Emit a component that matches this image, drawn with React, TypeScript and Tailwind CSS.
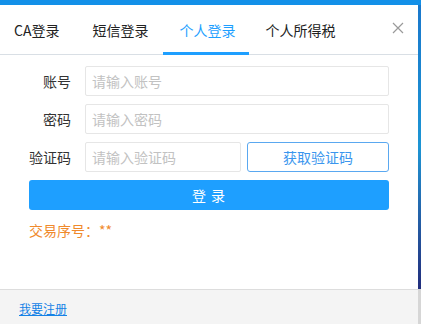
import React from 'react';

const tabs = [
  { label: 'CA登录', pad: 'pl-[14px] pr-[17px]' },
  { label: '短信登录', pad: 'pl-[16px] pr-[15px]' },
  { label: '个人登录', pad: 'pl-[16px] pr-[14px]' },
  { label: '个人所得税', pad: 'pl-[16px] pr-[16px]' },
];

const font = { fontFamily: '"Noto Sans CJK SC", "Noto Sans", sans-serif' };

const FormRow: React.FC<{ label: string; children: React.ReactNode }> = ({ label, children }) => (
  <div className="flex items-center h-[30px]">
    <label className="w-[42px] shrink-0 text-right text-[14px] leading-[20px] text-[#333]">{label}</label>
    <div className="flex flex-1 min-w-0 ml-[14px] h-full gap-[6px]">{children}</div>
  </div>
);

const Input: React.FC<{ placeholder: string }> = ({ placeholder }) => (
  <input
    className="flex-1 w-0 min-w-0 h-full border border-[#e6e6e6] rounded-[2px] px-[6px] text-[14px] outline-none placeholder:text-[#c2c2c2]"
    placeholder={placeholder}
  />
);

export default function App() {
  const active = 2;
  return (
    <div className="flex w-[421px] h-[324px] overflow-hidden" style={font}>
      {/* Modal */}
      <div className="w-[418px] h-full flex flex-col bg-white">
        <div className="h-[5px] bg-[#1390e8]" />

        {/* Tabs */}
        <div className="relative flex h-[50px] border-b border-[#d9dfe5]">
          {tabs.map((t, i) => (
            <div
              key={t.label}
              className={`relative flex items-center text-[14px] leading-[20px] ${t.pad} ${
                i === active ? 'text-[#1e9fff]' : 'text-[#222]'
              }`}
            >
              {t.label}
              {i === active && (
                <div className="absolute left-0 right-0 bottom-[-1px] h-[3px] bg-[#1e9fff]" />
              )}
            </div>
          ))}
          <button className="absolute right-[14px] top-[16px] w-[13px] h-[13px] flex items-center justify-center">
            <svg width="12" height="12" viewBox="0 0 12 12" fill="none" stroke="#9a9a9a" strokeWidth="1.2">
              <path d="M1 1L11 11M11 1L1 11" />
            </svg>
          </button>
        </div>

        {/* Form */}
        <div className="flex flex-col gap-[8px] px-[29px] pt-[11px]">
          <FormRow label="账号">
            <Input placeholder="请输入账号" />
          </FormRow>
          <FormRow label="密码">
            <Input placeholder="请输入密码" />
          </FormRow>
          <FormRow label="验证码">
            <Input placeholder="请输入验证码" />
            <button className="w-[142px] shrink-0 h-full border border-[#5aa8f0] rounded-[3px] text-[14px] text-[#3a96ee]">
              获取验证码
            </button>
          </FormRow>
          <button className="h-[30px] bg-[#1e9fff] rounded-[3px] text-white text-[14px] tracking-[1px]">
            登 录
          </button>
          <div className="mt-[2px] text-[14px] leading-[20px] text-[#f08a2c]">交易序号：**</div>
        </div>

        {/* Footer */}
        <div className="mt-auto h-[35px] border-t border-[#dddddd] bg-[#f4f4f4] flex items-center pl-[19px]">
          <a href="#" className="text-[12px] leading-[16px] text-[#1582e6] underline mt-[3px]">
            我要注册
          </a>
        </div>
      </div>

      {/* Page background peeking at right edge */}
      <div className="w-[3px] h-full flex flex-col">
        <div className="h-[5px] bg-[#1390e8]" />
        <div className="flex-1 bg-gradient-to-b from-[#1a78cc] via-[#1d95d4] to-[#212d7c]" />
        <div className="h-[35px] bg-[#d6d6d6]" />
      </div>
    </div>
  );
}
